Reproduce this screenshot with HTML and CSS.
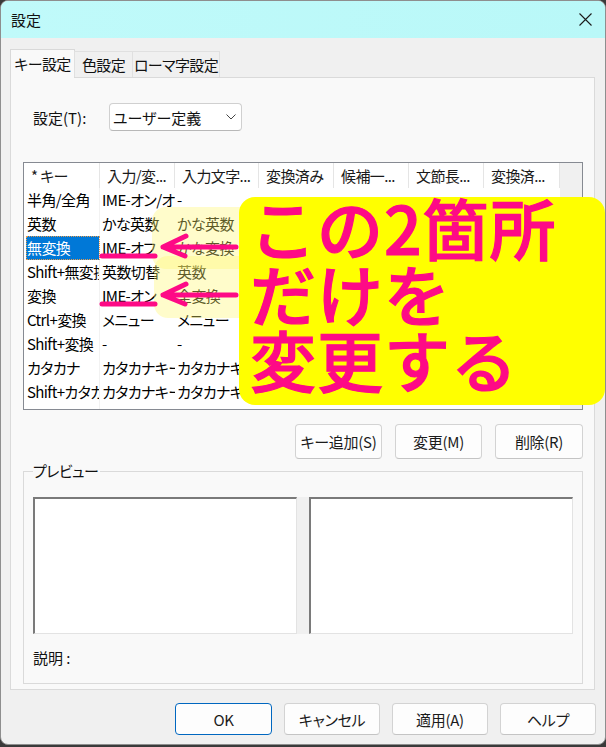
FILE: index.html
```html
<!DOCTYPE html>
<html lang="ja">
<head>
    <meta charset="UTF-8">
    <meta name="viewport" content="width=device-width, initial-scale=1.0">
    <title>設定</title>
    <link rel="stylesheet" href="styles.css">
</head>
<body>
<div class="window">
    <header class="titlebar">
        <span class="title">設定</span>
        <svg class="close-btn" width="13" height="13" viewBox="0 0 13 13">
            <path d="M0.5 0.5 12.5 12.5M12.5 0.5 0.5 12.5" stroke="#1c1c1c" stroke-width="1.1" fill="none"/>
        </svg>
    </header>

    <div class="dialog-body">
        <div class="tabs">
            <div class="tab tab-key active">キー設定</div>
            <div class="tab tab-color">色設定</div>
            <div class="tab tab-roma">ローマ字設定</div>
        </div>

        <div class="tab-panel">
            <div class="setting-row">
                <label class="setting-label">設定(T):</label>
                <div class="select">
                    <span>ユーザー定義</span>
                    <svg width="10" height="6" viewBox="0 0 10 6">
                        <path d="M0.5 0.5 5 5 9.5 0.5" stroke="#444" stroke-width="1" fill="none"/>
                    </svg>
                </div>
            </div>

            <!-- key list (list view) -->
            <div class="keylist">
                <div class="grid">
                    <div class="row head">
                        <div class="cell">* キー</div>
                        <div class="cell">入力/変...</div>
                        <div class="cell">入力文字...</div>
                        <div class="cell">変換済み</div>
                        <div class="cell">候補一...</div>
                        <div class="cell">文節長...</div>
                        <div class="cell">変換済...</div>
                    </div>
                    <div class="row">
                        <div class="cell">半角/全角</div>
                        <div class="cell">IME-オン/オフ</div>
                        <div class="cell">-</div>
                    </div>
                    <div class="row">
                        <div class="cell">英数</div>
                        <div class="cell">かな英数</div>
                        <div class="cell">かな英数</div>
                    </div>
                    <div class="row">
                        <div class="cell sel">無変換</div>
                        <div class="cell">IME-オフ</div>
                        <div class="cell">かな変換</div>
                    </div>
                    <div class="row">
                        <div class="cell">Shift+無変換</div>
                        <div class="cell">英数切替</div>
                        <div class="cell">英数</div>
                    </div>
                    <div class="row">
                        <div class="cell">変換</div>
                        <div class="cell">IME-オン</div>
                        <div class="cell">全変換</div>
                    </div>
                    <div class="row">
                        <div class="cell">Ctrl+変換</div>
                        <div class="cell">メニュー</div>
                        <div class="cell">メニュー</div>
                    </div>
                    <div class="row">
                        <div class="cell">Shift+変換</div>
                        <div class="cell">-</div>
                        <div class="cell">-</div>
                    </div>
                    <div class="row">
                        <div class="cell">カタカナ</div>
                        <div class="cell">カタカナキー</div>
                        <div class="cell">カタカナキー</div>
                    </div>
                    <div class="row">
                        <div class="cell">Shift+カタカナ</div>
                        <div class="cell">カタカナキー</div>
                        <div class="cell">カタカナキー</div>
                    </div>
                    <div class="row">
                        <div class="cell"></div>
                    </div>
                </div>
                <div class="vscroll"></div>
            </div>

            <div class="list-buttons">
                <button class="btn btn-add">キー追加(S)</button>
                <button class="btn btn-edit">変更(M)</button>
                <button class="btn btn-del">削除(R)</button>
            </div>

            <fieldset class="preview">
                <legend>プレビュー</legend>
                <div class="preview-boxes">
                    <div class="pbox"></div>
                    <div class="splitter"></div>
                    <div class="pbox"></div>
                </div>
                <div class="desc">説明 :</div>
            </fieldset>
        </div>

        <div class="dialog-buttons">
            <button class="btn btn-ok">OK</button>
            <button class="btn">キャンセル</button>
            <button class="btn">適用(A)</button>
            <button class="btn">ヘルプ</button>
        </div>
    </div>

    <!-- annotation layer -->
    <div class="hl hl-1"></div>
    <div class="hl hl-2"></div>
    <svg class="marks" width="606" height="747" viewBox="0 0 606 747">
        <g stroke="#fe0a86" stroke-width="5" stroke-linecap="round" stroke-linejoin="round" fill="none">
            <path d="M102 256 H155"/>
            <path d="M102 304 H155"/>
            <path d="M236 247 H163 M186 236 L163 247 L185 256"/>
            <path d="M236 295 H163 M186 284 L163 295 L185 304"/>
        </g>
    </svg>
    <div class="note"><div class="note-text">この2箇所<br>だけを<br>変更する</div></div>
</div>
</body>
</html>
```

FILE: styles.css
```css
* {
    box-sizing: border-box;
}

body {
    margin: 0;
    background: #3a3a3a;
    font-family: "Noto Sans CJK JP", "Noto Sans", sans-serif;
    font-size: 15px;
    color: #000;
    font-feature-settings: "palt";
}

/* dialog window */
.window {
    position: relative;
    width: 606px;
    height: 745px;
    background: #f0f0f0;
    border: 1px solid #8e8e8e;
    border-radius: 8px;
    overflow: hidden;
    display: flex;
    flex-direction: column;
}

.titlebar {
    flex-shrink: 0;
    height: 37px;
    background: linear-gradient(90deg, #c0fafa, #b9f8f8);
    display: flex;
    align-items: center;
    justify-content: space-between;
    padding: 0 13px 0 10px;
}

.title {
    font-size: 15px;
    color: #111;
}

.dialog-body {
    flex: 1;
    display: flex;
    flex-direction: column;
    padding: 11px 10px 0 9px;
}

/* tabs */
.tabs {
    display: flex;
    align-items: flex-end;
    height: 28px;
    position: relative;
    z-index: 1;
}

.tab {
    height: 26px;
    display: flex;
    align-items: center;
    justify-content: center;
    white-space: nowrap;
    letter-spacing: -0.6px;
    background: #f0f0f0;
    border: 1px solid #e0e0e0;
    border-bottom: none;
    margin-left: -1px;
    color: #111;
}

.tab.active {
    height: 29px;
    margin-left: 0;
    margin-bottom: -1px;
    background: #f9f9f9;
    border-color: #d9d9d9;
    padding-bottom: 2px;
}

.tab-key { width: 65px; }
.tab-color { width: 59px; }
.tab-roma { width: 88px; }

.tab-panel {
    height: 613px;
    background: #f9f9f9;
    border: 1px solid #dadada;
    padding: 25px 10px 0 12px;
}

.setting-row {
    display: flex;
    align-items: center;
    height: 28px;
}

.setting-label {
    width: 76px;
    margin-left: 10px;
    color: #111;
}

.select {
    width: 133px;
    height: 28px;
    background: #fff;
    border: 1px solid #d0d0d0;
    border-bottom-color: #b8b8b8;
    border-radius: 4px;
    display: flex;
    align-items: center;
    justify-content: space-between;
    padding: 0 5px 0 3px;
    color: #111;
}

/* list view */
.keylist {
    margin-top: 31px;
    width: 560px;
    height: 248px;
    background: #fff;
    border: 1px solid #868a92;
    display: flex;
    overflow: hidden;
}

.grid {
    width: 536px;
}

.row {
    display: grid;
    grid-template-columns: 76px 75px 84px 75px 75px 75px 76px;
    height: 24px;
    line-height: 24px;
}

.row.head {
    height: 25px;
    line-height: 25px;
}

.cell {
    white-space: nowrap;
    overflow: hidden;
    padding-left: 2px;
    letter-spacing: -0.6px;
}

.cell:first-child {
    padding-left: 3px;
    border-right: 1px solid #f2f2f2;
}

.head .cell {
    padding-left: 7px;
    border-right: 1px solid #e5e5e5;
    color: #1a1a1a;
}

.cell.sel {
    margin-left: 2px;
    padding-left: 1px;
    background: #0078d7;
    color: #fff;
    outline: 1px dotted #e89a4a;
    outline-offset: -1px;
}

.vscroll {
    width: 22px;
    background: #f0f0f0;
}

/* buttons */
.btn {
    font-family: inherit;
    font-size: 15px;
    font-feature-settings: "palt";
    letter-spacing: -0.3px;
    color: #1b1b1b;
    background: #fdfdfd;
    border: 1px solid #d3d3d3;
    border-bottom-color: #c4c4c4;
    border-radius: 4px;
    padding: 0;
}

.list-buttons {
    display: flex;
    justify-content: flex-end;
    gap: 13px;
    margin-top: 14px;
    margin-right: 1px;
}

.list-buttons .btn {
    width: 87px;
    height: 35px;
}

.list-buttons .btn-del {
    width: 88px;
}

/* preview group */
.preview {
    margin: 2px 0 0;
    width: 560px;
    height: 223px;
    border: 1px solid #dadada;
    padding: 16px 9px 0;
}

.preview legend {
    padding: 0 2px 0 0;
    line-height: 20px;
    letter-spacing: -0.6px;
    color: #111;
}

.preview-boxes {
    display: flex;
    height: 137px;
}

.pbox {
    width: 264px;
    background: #fff;
    border-style: solid;
    border-width: 2px 1px 1px 2px;
    border-color: #7a7a7a #e3e3e3 #e3e3e3 #7a7a7a;
}

.splitter {
    width: 12px;
    background: #f0f0f0;
}

.desc {
    margin-top: 14px;
    line-height: 20px;
    color: #111;
}

.dialog-buttons {
    display: flex;
    justify-content: flex-end;
    gap: 12px;
    margin-top: 13px;
    margin-right: -1px;
}

.dialog-buttons .btn {
    width: 96px;
    height: 32px;
}

.dialog-buttons .btn-ok {
    width: 97px;
    border-color: #0067c0;
}

/* annotation overlays */
.hl {
    position: absolute;
    width: 110px;
    height: 62px;
    border-radius: 14px;
    background: rgba(255, 246, 110, 0.36);
}

.hl-1 {
    left: 151px;
    top: 206px;
}

.hl-2 {
    left: 153px;
    top: 255px;
}

.marks {
    position: absolute;
    left: -1px;
    top: -1px;
    pointer-events: none;
}

.note {
    position: absolute;
    left: 238px;
    top: 196px;
    width: 366px;
    height: 208px;
    background: #ffff00;
    border-radius: 16px;
    padding: 0 0 0 11px;
    color: #fe0a86;
    -webkit-text-stroke: 1.2px #fe0a86;
    font-size: 66px;
    font-weight: 500;
    line-height: 66px;
    letter-spacing: 1px;
    font-feature-settings: normal;
    white-space: nowrap;
}

.note-text {
    margin-top: -4px;
}
```
